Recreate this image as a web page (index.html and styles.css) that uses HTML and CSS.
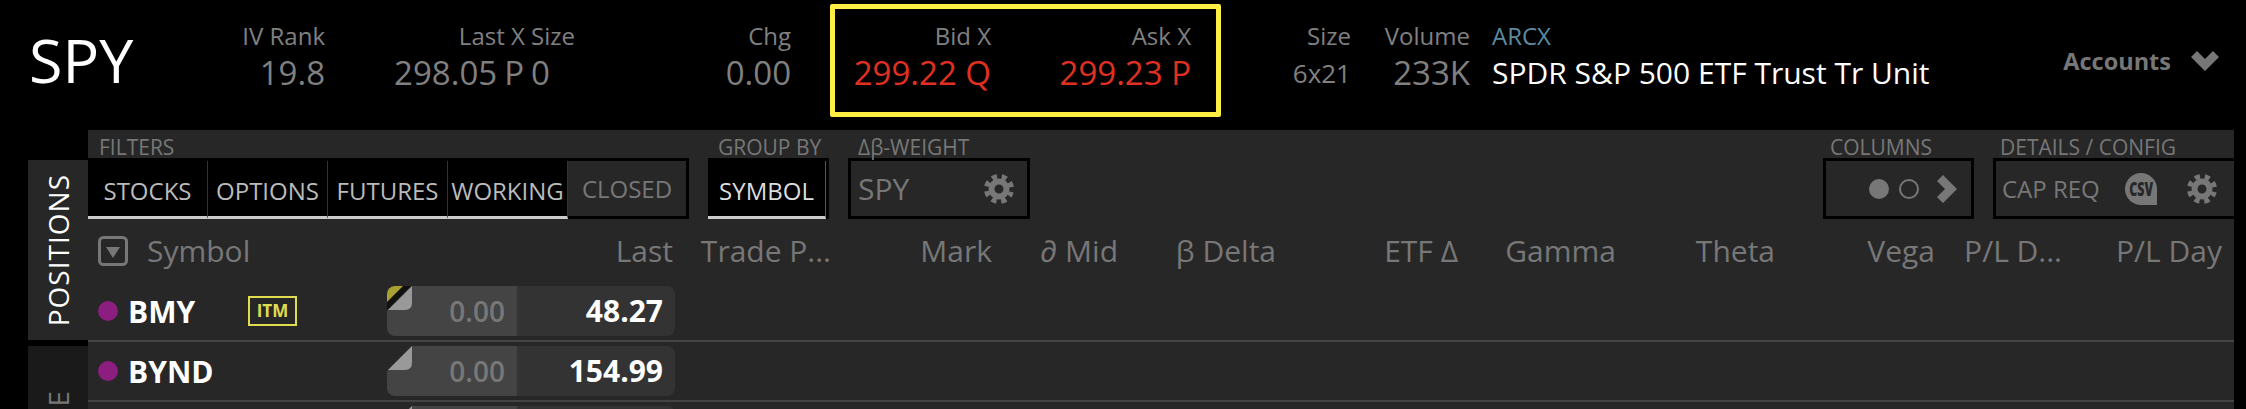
FILE: index.html
```html
<!doctype html>
<html>
<head>
<meta charset="utf-8">
<title>SPY</title>
<link rel="stylesheet" href="styles.css">
</head>
<body>
<svg class="defs" width="0" height="0">
	<symbol id="gear" viewBox="0 0 30 30">
		<circle cx="15" cy="15" r="7.5" fill="none" stroke="currentColor" stroke-width="6"/>
		<circle cx="15" cy="15" r="12.5" fill="none" stroke="currentColor" stroke-width="5" stroke-dasharray="5.2 4.62" stroke-dashoffset="2.6" transform="rotate(22.5 15 15)"/>
	</symbol>
	<symbol id="fold" viewBox="0 0 26 26">
		<polygon points="0,0 25,0 0,25" fill="#272727"/>
		<path d="M1 24 25 0V17Q25 24 18 24Z" fill="#999"/>
	</symbol>
</svg>

<div class="quote">
	<div class="ticker">SPY</div>
	<div class="cell iv"><div class="lbl">IV Rank</div><div class="val">19.8</div></div>
	<div class="cell last"><div class="lbl">Last X Size</div><div class="val lastval">298.05 P 0</div></div>
	<div class="cell chg"><div class="lbl">Chg</div><div class="val">0.00</div></div>
	<div class="hilite">
		<div class="cell bid"><div class="lbl">Bid X</div><div class="val red">299.22 Q</div></div>
		<div class="cell ask"><div class="lbl">Ask X</div><div class="val red">299.23 P</div></div>
	</div>
	<div class="cell size"><div class="lbl">Size</div><div class="val small">6x21</div></div>
	<div class="cell vol"><div class="lbl">Volume</div><div class="val">233K</div></div>
	<div class="cell name"><div class="lbl exch">ARCX</div><div class="val fullname">SPDR S&amp;P 500 ETF Trust Tr Unit</div></div>
	<div class="accounts">Accounts
		<svg class="acc-chev" width="28" height="20" viewBox="0 0 28 20"><path d="M0 6 6 0 14 8 22 0 28 6 14 20Z" fill="#777"/></svg>
	</div>
</div>

<div class="main">
	<div class="tabs">
		<div class="tab on"><span>POSITIONS</span></div>
		<div class="tab"><span>TRADE</span></div>
	</div>
	<div class="panel">
		<div class="tools">
			<div class="grp">
				<div class="grplbl first">FILTERS</div>
				<div class="filters wide">
					<div class="fbtn w1 act">STOCKS</div>
					<div class="fbtn w1 act">OPTIONS</div>
					<div class="fbtn w1 act">FUTURES</div>
					<div class="fbtn w1 act">WORKING</div>
					<div class="fbtn off">CLOSED</div>
				</div>
			</div>
			<div class="grp">
				<div class="grplbl">GROUP BY</div>
				<div class="filters groupby"><div class="fbtn act full">SYMBOL</div></div>
			</div>
			<div class="grp">
				<div class="grplbl">Δβ-WEIGHT</div>
				<div class="toolbox weight">SPY<svg class="gear" width="30" height="30"><use href="#gear"/></svg></div>
			</div>
			<div class="grp push">
				<div class="grplbl tight">COLUMNS</div>
				<div class="toolbox cols">
					<span class="dot fill"></span><span class="dot"></span>
					<svg width="20" height="28" viewBox="0 0 20 28"><path d="M0 6 6 0 20 14 6 28 0 22 8 14Z" fill="#777"/></svg>
				</div>
			</div>
			<div class="grp">
				<div class="grplbl tight">DETAILS / CONFIG</div>
				<div class="toolbox details">
					<span>CAP REQ</span>
					<span class="csv"><b>CSV</b></span>
					<svg class="gear" width="30" height="30"><use href="#gear"/></svg>
				</div>
			</div>
		</div>

		<div class="cols-head">
			<div class="symhead">
				<svg width="30" height="30" viewBox="0 0 30 30"><rect x="1.5" y="1.5" width="27" height="27" rx="4" fill="none" stroke="#777" stroke-width="3"/><path d="M8 11H22L15 22Z" fill="#777"/></svg>
				<span>Symbol</span>
			</div>
			<div class="ch">Last</div>
			<div class="ch">Trade P...</div>
			<div class="ch">Mark</div>
			<div class="ch">∂ Mid</div>
			<div class="ch">β Delta</div>
			<div class="ch">ETF Δ</div>
			<div class="ch">Gamma</div>
			<div class="ch">Theta</div>
			<div class="ch">Vega</div>
			<div class="ch">P/L D...</div>
			<div class="ch">P/L Day</div>
		</div>

		<div class="row">
			<span class="pdot"></span><span class="sym">BMY</span><span class="itm">ITM</span>
			<div class="pill">
				<svg class="corner" width="26" height="26"><use href="#fold"/><polygon points="0,0 24,0 0,24" fill="#111"/><polygon points="0,0 16,0 0,16" fill="#a8a030"/></svg>
				<div class="pleft">0.00</div><div class="pright">48.27</div>
			</div>
		</div>
		<div class="row">
			<span class="pdot"></span><span class="sym">BYND</span>
			<div class="pill">
				<svg class="corner" width="26" height="26"><use href="#fold"/></svg>
				<div class="pleft">0.00</div><div class="pright">154.99</div>
			</div>
		</div>
		<div class="row">
			<div class="pill">
				<svg class="corner" width="26" height="26"><use href="#fold"/></svg>
				<div class="pleft"></div><div class="pright"></div>
			</div>
		</div>
	</div>
</div>
</body>
</html>
```

FILE: styles.css
```css
*{box-sizing:border-box;margin:0;padding:0;font-family:'Open Sans','Noto Sans',sans-serif;}
html,body{width:100%;height:409px;overflow:hidden;background:#000;}
.defs{position:absolute;}

.quote{display:flex;align-items:flex-start;height:130px;padding-left:29px;}
.ticker{width:211px;padding-top:30px;font-size:61px;line-height:60px;color:#fff;}
.cell{padding-top:21px;text-align:right;white-space:nowrap;}
.lbl{height:30px;font-size:24px;line-height:30px;color:#808080;}
.val{height:44px;font-size:33px;line-height:44px;color:#808080;}
.iv{width:85px;}
.last{width:250px;}
.lastval{padding-right:25px;word-spacing:-1.5px;}
.chg{width:216px;margin-right:39px;}
.hilite{display:flex;width:391px;height:113px;margin-top:4px;border:5px solid #ffee44;border-radius:2px;}
.hilite .cell{padding-top:12px;}
.bid{width:156px;}
.ask{width:200px;}
.val.red{color:#e03020;}
.size{width:130px;}
.val.small{font-size:26px;}
.vol{width:119px;}
.name{margin-left:22px;text-align:left;}
.lbl.exch{color:#5e8a9f;}
.val.fullname{font-size:30px;color:#fff;}
.accounts{display:flex;align-items:center;gap:20px;margin:46px 27px 0 auto;font-size:23.5px;line-height:30px;font-weight:700;color:#777;}

.main{display:flex;height:279px;margin:0 12px 0 28px;overflow:hidden;}
.tabs{display:flex;flex-direction:column;gap:6px;width:60px;padding-top:30px;}
.tab{display:flex;align-items:center;justify-content:center;flex:none;height:180px;background:#1a1a1a;}
.tab span{writing-mode:vertical-rl;transform:rotate(180deg);font-size:28px;letter-spacing:1px;color:#777;}
.tab.on{background:#272727;}
.tab.on span{color:#fff;}
.panel{flex:1;overflow:hidden;background:#272727;}

.tools{display:flex;gap:19px;height:89px;}
.grplbl{height:28px;padding-left:10px;font-size:21px;line-height:34px;color:#777;white-space:nowrap;}
.grplbl.first{padding-left:11px;}
.grplbl.tight{padding-left:7px;}
.filters{display:flex;height:61px;padding-top:3px;background:#000;}
.wide{width:601px;padding-right:3px;}
.groupby{width:121px;padding-right:3px;}
.fbtn{display:flex;align-items:center;justify-content:center;height:58px;padding-top:3px;font-size:24px;color:#bbb;background:#000;}
.fbtn.act{border-bottom:3px solid #ccc;}
.w1{width:120px;border-right:1px solid #333;}
.full{width:100%;border-right:1px solid #555;color:#ddd;}
.fbtn.off{flex:1;height:55px;padding-top:0;background:#272727;color:#777;}
.toolbox{display:flex;align-items:center;height:61px;border:3px solid #000;font-size:24px;color:#777;}
.weight{justify-content:space-between;width:182px;padding:0 13px 0 7px;font-size:30px;}
.gear{flex:none;color:#777;}
.push{margin-left:auto;}
.cols{justify-content:flex-end;gap:10px;width:151px;padding-right:14px;}
.cols svg{margin-left:8px;}
.dot{width:20px;height:20px;border:2px solid #777;border-radius:50%;}
.dot.fill{background:#777;}
.details{width:241px;padding-left:6px;border-right:0;}
.csv{display:flex;align-items:center;justify-content:center;flex:none;width:32px;height:32px;margin-left:25px;margin-right:30px;border-radius:50% 50% 0 50%;background:#777;color:#272727;}
.csv b{display:block;font-size:20px;font-weight:800;transform:scaleX(.62);}

.cols-head{display:grid;grid-template-columns:485px 100px 158px 161px 126px 158px 182px 158px 159px 160px 127px 160px;align-items:center;height:63px;font-size:30px;color:#777;}
.symhead{display:flex;align-items:center;gap:19px;padding-left:10px;}
.ch{text-align:right;white-space:nowrap;}

.row{display:flex;align-items:center;height:60px;border-bottom:2px solid #444;padding:4px 0 4px 10px;}
.pdot{flex:none;width:20px;height:20px;border-radius:50%;background:#8b1e7e;}
.sym{width:120px;margin-left:10px;font-size:30px;font-weight:700;color:#fff;}
.itm{flex:none;width:49px;height:30px;border:2px solid #e0dc50;font-size:17px;line-height:26px;font-weight:700;text-align:center;color:#e0dc50;}
.pill{position:relative;display:flex;overflow:hidden;width:288px;height:50px;margin-left:auto;margin-right:1559px;border-radius:8px;}
.corner{position:absolute;top:0;left:0;}
.pleft{width:130px;padding-right:12px;background:#444;text-align:right;font-size:28px;line-height:50px;font-weight:600;color:#777;}
.pright{flex:1;padding-right:12px;background:#333;text-align:right;font-size:30px;line-height:50px;font-weight:700;color:#fff;}
```
